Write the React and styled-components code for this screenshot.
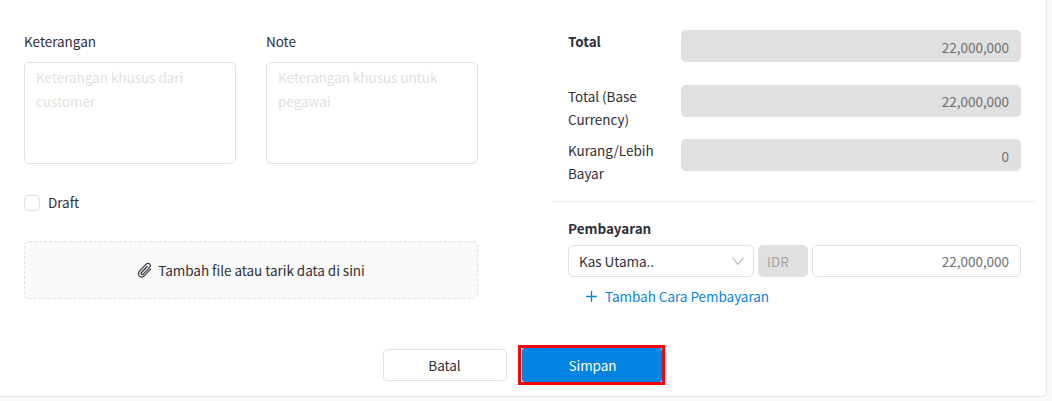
import React from "react";
import styled, { createGlobalStyle } from "styled-components";

const Global = createGlobalStyle`
  html, body { margin: 0; padding: 0; background: #fafafa; }
  body { font-family: "Noto Sans CJK JP", "Noto Sans", sans-serif; font-size: 13.5px; letter-spacing: -0.03px; color: #2f2f38; }
  * { box-sizing: border-box; }
`;

const Card = styled.div`
  width: 1047px;
  height: 397px;
  background: #fff;
  border-right: 1px solid #e6e6e6;
  border-bottom: 1px solid #e6e6e6;
  border-bottom-right-radius: 4px;
  display: flex;
  flex-direction: column;
`;
const Main = styled.div`
  display: flex;
  height: 345px;
`;
const Left = styled.div`
  width: 552px;
  padding: 30px 0 0 24px;
  display: flex;
  flex-direction: column;
`;
const NotesRow = styled.div`
  display: flex;
  gap: 30px;
`;
const Field = styled.div`
  width: 212px;
  display: flex;
  flex-direction: column;
`;
const Label = styled.div`
  height: 32px;
  line-height: 23px;
`;
const NoteBox = styled.div`
  height: 102px;
  border: 1px solid #e0e0e0;
  border-radius: 5px;
  padding: 2px 11px;
  line-height: 24px;
  color: #e3e0e0;
`;
const CheckRow = styled.div`
  display: flex;
  gap: 8px;
  margin-top: 31px;
  height: 16px;
  line-height: 14px;
`;
const Check = styled.span`
  width: 16px;
  height: 16px;
  border: 1px solid #e0e0e0;
  border-radius: 4px;
`;
const Drop = styled.div`
  width: 454px;
  height: 58px;
  margin-top: 30px;
  background: #fafafa;
  border: 1px dashed #e0e0e0;
  border-radius: 5px;
  display: flex;
  align-items: center;
  justify-content: center;
  gap: 6px;
`;
const Right = styled.div`
  width: 484px;
  padding-top: 30px;
  display: flex;
  flex-direction: column;
`;
const SumRow = styled.div`
  display: flex;
  padding: 0 15px 0 16px;
  height: ${(p) => p.$h}px;
`;
const SumLabel = styled.div`
  width: 113px;
  line-height: 23px;
  font-weight: ${(p) => (p.$bold ? 700 : 400)};
`;
const ReadOnly = styled.div`
  width: 340px;
  height: 32px;
  background: #e0e0e0;
  border-radius: 5px;
  color: #6f6f6f;
  text-align: right;
  padding: 0 12px;
  line-height: ${(p) => p.$lh}px;
`;
const Divider = styled.div`
  height: 1px;
  background: #ececec;
  margin-top: 30px;
`;
const PayTitle = styled.div`
  margin: 15px 0 0 16px;
  height: 28px;
  line-height: 23px;
  font-weight: 700;
`;
const PayRow = styled.div`
  display: flex;
  gap: 4px;
  padding-left: 16px;
`;
const Select = styled.div`
  width: 186px;
  height: 32px;
  border: 1px solid #e0e0e0;
  border-radius: 5px;
  display: flex;
  align-items: center;
  justify-content: space-between;
  padding: 0 4px 0 10px;
`;
const Currency = styled.div`
  width: 50px;
  height: 32px;
  background: #e0e0e0;
  border-radius: 5px;
  color: #a3a3a3;
  line-height: 32px;
  padding-left: 9px;
`;
const Amount = styled.div`
  width: 209px;
  height: 32px;
  border: 1px solid #e0e0e0;
  border-radius: 5px;
  text-align: right;
  line-height: 30px;
  padding: 0 11px;
  color: #6f6f6f;
`;
const AddLink = styled.div`
  display: flex;
  align-items: center;
  gap: 8px;
  margin: 7px 0 0 34px;
  height: 24px;
  color: #0a84d8;
`;
const Actions = styled.div`
  display: flex;
  justify-content: center;
  align-items: center;
  gap: 11px;
  height: 40px;
  width: 1047px;
`;
const Cancel = styled.button`
  width: 124px;
  height: 32px;
  background: #fff;
  border: 1px solid #e0e0e0;
  border-radius: 4px;
  font: inherit;
  letter-spacing: inherit;
  color: #2f2f38;
  padding: 0;
`;
const Highlight = styled.div`
  width: 147px;
  height: 40px;
  border: 3px solid #fb0007;
  padding: 0 0 0 1px;
`;
const Save = styled.button`
  width: 140px;
  height: 34px;
  background: #0284e2;
  border: none;
  border-radius: 3px;
  font: inherit;
  letter-spacing: inherit;
  color: #fff;
  padding: 0 0 0 2px;
  display: block;
`;

const Clip = () => (
  <svg width="15" height="16" viewBox="0 0 16 16" fill="none" stroke="#34343c" strokeWidth="1.250" strokeLinecap="round" strokeLinejoin="round">
    <path d="M14.500 7 8.200 13.800c-1.700 1.800-4.100 2-5.600.7-1.400-1.300-1.300-3.700.4-5.500L9.500 2c1.200-1.300 3-1.500 4-.5s.900 2.700-.3 4L6.900 12.200c-.7.700-1.600.8-2.100.3s-.4-1.400.3-2.100L11 4" />
  </svg>
);
const Chevron = () => (
  <svg width="14" height="14" viewBox="0 0 14 14" fill="none" stroke="#9a9a9a" strokeWidth="1" style={{ marginRight: 4 }}>
    <path d="M1.500 3.500 7 10.500l5.500-7" />
  </svg>
);
const Plus = () => (
  <svg width="11" height="11" viewBox="0 0 11 11" stroke="#0a84d8" strokeWidth="1.300">
    <path d="M5.500 0v11M0 5.500h11" />
  </svg>
);

export default function App() {
  return (
    <>
      <Global />
      <Card>
        <Main>
          <Left>
            <NotesRow>
              <Field>
                <Label>Keterangan</Label>
                <NoteBox>Keterangan khusus dari customer</NoteBox>
              </Field>
              <Field>
                <Label>Note</Label>
                <NoteBox>Keterangan khusus untuk pegawai</NoteBox>
              </Field>
            </NotesRow>
            <CheckRow>
              <Check />
              Draft
            </CheckRow>
            <Drop>
              <Clip />
              Tambah file atau tarik data di sini
            </Drop>
          </Left>
          <Right>
            <SumRow $h={55}>
              <SumLabel $bold>Total</SumLabel>
              <ReadOnly $lh={34}>22,000,000</ReadOnly>
            </SumRow>
            <SumRow $h={54}>
              <SumLabel>Total (Base Currency)</SumLabel>
              <ReadOnly $lh={32}>22,000,000</ReadOnly>
            </SumRow>
            <SumRow $h={32}>
              <SumLabel>Kurang/Lebih Bayar</SumLabel>
              <ReadOnly $lh={34}>0</ReadOnly>
            </SumRow>
            <Divider />
            <PayTitle>Pembayaran</PayTitle>
            <PayRow>
              <Select>
                Kas Utama..
                <Chevron />
              </Select>
              <Currency>IDR</Currency>
              <Amount>22,000,000</Amount>
            </PayRow>
            <AddLink>
              <Plus />
              Tambah Cara Pembayaran
            </AddLink>
          </Right>
        </Main>
        <Actions>
          <Cancel>Batal</Cancel>
          <Highlight>
            <Save>Simpan</Save>
          </Highlight>
        </Actions>
      </Card>
    </>
  );
}
